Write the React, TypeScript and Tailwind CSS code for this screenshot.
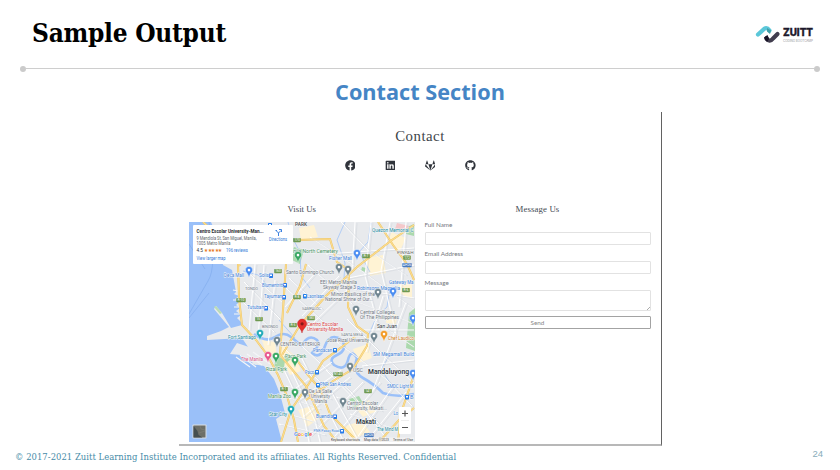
import React from "react";
import { FaFacebook, FaGithub, FaGitlab, FaLinkedin } from "react-icons/fa";

type Label = [string, number, number, number, string, number?, boolean?];
const BLUE = "#3f83d9";
const GREEN = "#4b9463";
const GREY = "#707781";
const DARK = "#333a42";
const TEAL = "#238ca0";

// text, left, baseline, width, colour, size, bold
const labels: Label[] = [
  ["PARK", 295, 226, 12, "#555", 4.5, true],
  ["Quezon Memorial C", 372, 231.5, 41.5, TEAL, 4.8],
  ["Manila North Cemetery", 286, 253, 52, GREEN, 5],
  ["Fisher Mall", 329, 259.5, 23, BLUE, 5],
  ["PINYAH", 397, 254, 16.5, "#666", 4.3],
  ["Santo Domingo Church", 286, 273.5, 48, GREY, 5],
  ["Deca Mall", 224, 276.5, 20, BLUE, 5],
  ["Solis", 259, 276.5, 10, BLUE, 5],
  ["Blumentritt", 262, 286.5, 21, BLUE, 5],
  ["TONDO", 245, 290, 13, GREY, 3.8],
  ["Tayuman", 264, 298, 18, BLUE, 5],
  ["Tutuban", 247, 309, 17, BLUE, 5],
  ["Laonlaan", 307, 297.5, 17, BLUE, 4.5],
  ["SAMPALOC", 302, 310, 19, GREY, 4],
  ["BINONDO", 262, 328, 16, GREY, 4],
  ["EEI Metro Manila", 320, 284, 37, GREY, 5],
  ["Skyway Stage 3", 323, 289, 33, GREY, 5],
  ["Robinsons Magnolia", 357, 289.5, 43, BLUE, 5],
  ["Gateway Ma", 389, 283.5, 24.5, BLUE, 4.9],
  ["Minor Basilica of the", 331, 296, 44, GREY, 5],
  ["National Shrine of Our...", 325, 301, 48, GREY, 5],
  ["Central Colleges", 360, 313.5, 35, GREY, 5],
  ["Of The Philippines", 360, 318.5, 39, GREY, 5],
  ["Centro Escolar", 307, 326, 31, "#dc3e43", 5],
  ["University-Manila", 307, 331, 36, "#dc3e43", 5],
  ["San Juan", 377, 328, 20, DARK, 5.4],
  ["SANTA MESA", 341, 336, 22, GREY, 3.8],
  ["Jose Rizal University", 327, 342, 42, GREY, 4.8],
  ["Chef Laudico", 388, 340, 26, "#d58124", 4.8],
  ["SM Megamall Build", 373, 356, 41, BLUE, 4.9],
  ["Fort Santiago", 228, 338.5, 28, TEAL, 5],
  ["CENTRO EXTERIOR", 280, 346, 40, GREY, 4.5],
  ["Pandacan", 313, 351.5, 19, BLUE, 5],
  ["Paco Park", 285, 358, 21, GREEN, 5],
  ["The Manila", 241, 360.5, 22, "#dc5686", 5],
  ["Rizal Park", 266, 370.5, 21, GREEN, 5],
  ["Paco", 305, 373.5, 9, BLUE, 5],
  ["USC", 353, 371.5, 10, GREY, 5],
  ["Mandaluyong", 368, 373.7, 41, DARK, 6.3, true],
  ["PNR San Andres", 320, 386, 31, BLUE, 4.8],
  ["SMDC Light M", 387, 387.5, 26.5, BLUE, 4.8],
  ["De La Salle", 309, 393, 23, GREY, 4.6],
  ["University", 311, 398, 19, GREY, 4.6],
  ["- Manila", 312, 403, 15, GREY, 4.6],
  ["Manila Zoo", 268, 398, 23, GREEN, 5],
  ["Star City", 269, 415.5, 18, TEAL, 5],
  ["Centro Escolar", 347, 404.5, 31, GREY, 5],
  ["University, Makati...", 347, 409.5, 40, GREY, 5],
  ["Buendia", 316, 418, 17, BLUE, 5],
  ["Makati", 356, 423.5, 20, DARK, 6.4, true],
  ["PNR Pasay Road", 313.5, 432, 26, BLUE, 4.4],
  ["The Mind M", 377, 431, 21, TEAL, 4.6],
  ["Lo", 393.5, 415, 4.5, BLUE, 4.6],
  ["B", 410, 398.5, 3.5, BLUE, 4.6],
];

const majorRoads = [
  "M238 264L239 298L242 325L256 340L268 356L278 375L287 396L294 420L298 442",
  "M203 222L230 247L240 266M286 264L283 310L280 355L306 386L324 426L337 442",
  "M414 225L392 240L357 267L326 296L300 325L282 355",
  "M297 240L330 239L337 262L349 270L348 307L357 326L368 334L367 346L353 369L333 381L306 400",
  "M378 222L393 245L407 264L414 280M306 264L300 286L287 313",
  "M281 442L291 410L310 382L323 361L355 337M379 442L400 419L414 408",
  "M398 442L401 413L414 375M294 356L307 374L320 389L330 414L358 442",
];
const streets = [
  "M245 270L282 302M244 282L280 319M241 300L274 332M255 264L249 330M264 265L258 336M275 280L268 345",
  "M289 278L322 309M286 288L329 327M308 265L352 304M318 270L285 307M339 276L302 316M351 286L312 324",
  "M310 237L355 266L414 309M341 222L367 249L406 275M355 222L352 270M371 222L365 276L379 330M390 222L381 270L397 339M406 222L399 307M326 254L414 248M348 278L414 265M354 289L414 298",
  "M354 301L414 324M362 312L414 347M347 319L384 356L414 383M383 296L366 352M406 302L373 390M337 342L385 378L412 406M360 330L414 330M362 366L414 360",
  "M284 348L332 393L359 442M302 346L351 392L389 442M283 368L302 408L309 442M292 372L315 421L320 442M300 355L344 442M326 370L380 425M332 362L296 388M341 370L296 402M350 377L303 417M363 382L310 436M380 382L330 442M394 385L354 442M406 392L366 442",
  "M280 412L312 421L340 440M289 398L320 409M279 424L325 435M286 386L331 399M336 397L382 411M350 414L397 430",
];
const transit = [
  [270, 225], [271, 275.5], [285, 285], [284, 297], [266, 308], [305, 296], [335, 350], [317, 372], [318, 385], [407, 397], [335, 416.5], [342, 431],
];
const shields: [number, number, string, string][] = [
  [297, 240, "170", "#6e9950"], [278, 271, "160", "#6e9950"], [241, 300, "R-10", "#6e9950"], [259, 319, "151", "#6e9950"], [297, 297, "R-8", "#6e9950"], [311, 318, "180", "#6e9950"], [293, 325, "R-5", "#6e9950"], [366, 256, "R-7", "#6e9950"], [407, 257.5, "172", "#6e9950"], [407, 265, "AH26", "#477abf"], [406, 290, "R-6", "#6e9950"], [338, 374, "N140", "#6e9950"], [368, 391, "141", "#6e9950"], [284, 389, "R-1", "#6e9950"], [369, 435, "AH26", "#477abf"],
];
const pins: [number, number, string][] = [
  [298, 258, "#38a763"], [357, 256, "#4b8df1"], [339, 270, "#708590"], [348, 272, "#708590"], [249, 273, "#4b8df1"], [378, 295, "#708590"], [393, 294, "#4b8df1"], [356, 312, "#708590"], [260, 336, "#20aab7"], [277, 343, "#708590"], [374, 339, "#708590"], [384, 337, "#f29b27"], [268, 358, "#e8578d"], [276, 359, "#38a763"], [295, 363, "#38a763"], [350, 369, "#708590"], [295, 395, "#38a763"], [305, 395, "#708590"], [291, 412, "#20aab7"], [343, 404, "#708590"], [413, 321, "#4b8df1"], [413, 376, "#4b8df1"],
];

function MapPin({ x, y, color }: { x: number; y: number; color: string }) {
  return (
    <g transform={`translate(${x} ${y})`}>
      <path d="M0 5C-1-.1-3.6-.6-3.6-3A3.6 3.6 0 1 1 3.6-3C3.6-.6 1-.1 0 5Z" fill={color} stroke="#fff" strokeWidth=".4" />
      <circle cy="-2.9" r="1.3" fill="#fff" />
    </g>
  );
}

function MapView() {
  return (
    <svg className="block h-[220px] w-[225.5px]" viewBox="189 222 225.5 220" fontFamily="Roboto, sans-serif">
      <rect x="189" y="222" width="226" height="220" fill="#e8eaed" />
      <g fill="#fff3d4">
        <path d="M366 258l17-3 3 18-16 3zM283 345l12 11 6 15-11 4-11-20zM262 340l13 2 2 17-12-9zM354 406l15-6 8 11-14 6zM391 232l15 6-6 13-12-8z" />
        <path d="M353 349l15-5 4 14-14 5zM397 281l15 2v16l-11-5zM298 410l14-4 6 13-11 8zM345 426l17-5 8 11-19 8zM299 228l15-3 4 12-17 3zM387 313l10 2-1 9-10-1z" />
      </g>
      <g fill="#abd9ad">
        <path d="M294 247l10 3-4 14-10-5zM276 354l9 7-2 12-9-4zM407 227l7-3v12l-8-2zM409 313l6-5v43l-9-3zM349 399l10-3 4 7-9 5zM284 356l5-2 2 5-5 4zM362 267l4 1v4l-5-1z" />
      </g>
      <path d="M397 223l12 3-2 6-12-3z" fill="#f4c8ca" />
      <path d="M189 222H211L219 240L223 265L232 270L236 292L234 294L239 296L235 299L239 302L236 305L240 308L236 311L241 315L237 318L242 323L242 338L250 350L246 352L254 361L252 364L264 366L274 379L280 394L285 413L276 419L282 442H189Z" fill="#9ac0f9" />
      <path d="M207 336L221 331L229 327L214 309L216 306L222 313L231 328L242 325V338L207 340ZM230 354L237 343L249 347L262 361L256 365L241 355Z" fill="#e8eaed" />
      <path d="M214 307l2-1 6 7-2 1z" fill="#b9dcb7" />
      <g stroke="#f4f5f8" strokeWidth="1.2">
        <path d="M236 357l14 10M240 355l16 12M247 354l15 11M253 352l17 12M238 291l-5-1M239 300h-6M240 307h-6M240 314h-6" />
      </g>
      <g fill="none" stroke="#9ac0f9" strokeLinejoin="round">
        <path d="M254 334Q266 343 275 337T291 337L302 346Q308 333 317 340Q321 345 312 353Q320 360 325 346T342 340Q348 350 337 355Q328 359 334 365Q345 372 348 360T357 358Q352 372 363 378Q374 384 383 393Q396 398 414 394" strokeWidth="2.6" />
        <path d="M288 222l4 15 8 15 1 24 9 12M345 222l-8 18 8 23-1 15M371 223l-3 19-9 10 11 20M390 288l-3 19-10 9-9 20M243 271l15 4 12 13M279 320l16 18M390 355l-9 14 13 20M324 401l-18-6" strokeWidth=".7" />
      </g>
      <g fill="none" stroke="#fff" strokeWidth="1">{streets.map((d) => <path key={d} d={d} />)}</g>
      <g fill="none" stroke="#cbd0d6" strokeWidth=".4">{streets.map((d) => <path key={d} d={d} transform="translate(2 1)" />)}</g>
      <g fill="none" stroke="#edc461" strokeWidth="2">{majorRoads.map((d) => <path key={d} d={d} />)}</g>
      <g fill="none" stroke="#fbdc90" strokeWidth="1.2">{majorRoads.map((d) => <path key={d} d={d} />)}</g>
      <path d="M189 318L209 293M189 314L208 281Q217 267 209 222M189 244L205 269" fill="none" stroke="#79a5e8" strokeWidth=".5" />
      {shields.map(([x, y, text, color]) => (
        <g key={`${x}-${y}`}>
          <rect x={x - (text.length > 3 ? 4.7 : 3.8)} y={y - 2} width={text.length > 3 ? 9.4 : 7.6} height="4.3" rx=".7" fill={color} />
          <text x={x} y={y + 1.3} textAnchor="middle" fontSize="3.4" fill="#fff">{text}</text>
        </g>
      ))}
      {transit.map(([x, y]) => (
        <g key={`${x}-${y}`}>
          <rect x={x - 2} y={y - 2} width="4" height="4.4" rx=".6" fill="#277ce8" />
          <path d={`M${x - 1} ${y - 1}h2v1.6h-2z`} fill="#fff" />
        </g>
      ))}
      <g stroke="#f4f6f8" strokeWidth="1" paintOrder="stroke">
        {labels.map(([text, x, y, width, color, size, bold]) => (
          <text key={`${text}-${y}`} x={x} y={y} textLength={width} lengthAdjust="spacingAndGlyphs" fill={color} fontSize={size} fontWeight={bold ? 600 : 400}>{text}</text>
        ))}
      </g>
      {pins.map(([x, y, color]) => <MapPin key={`${x}-${y}`} x={x} y={y} color={color} />)}
      <path d="M302 333C301 328 297.5 327.5 297.5 323.7A4.6 4.6 0 1 1 306.7 323.7C306.7 327.5 303 328 302 333Z" fill="#e52e2c" stroke="#b71f21" strokeWidth=".4" />
      <circle cx="302.1" cy="323.8" r="1.6" fill="#851818" />
      <text x="294" y="435.5" fontSize="6" fontWeight="500" textLength="18" lengthAdjust="spacingAndGlyphs" stroke="#fff" strokeWidth=".7" paintOrder="stroke">
        <tspan fill="#4285f4">G</tspan><tspan fill="#ea4335">o</tspan><tspan fill="#fbbc05">o</tspan><tspan fill="#4285f4">g</tspan><tspan fill="#34a853">l</tspan><tspan fill="#ea4335">e</tspan>
      </text>
      <rect x="330" y="437.5" width="84" height="4.5" fill="#f3f3f3" opacity=".85" />
      <g fontSize="3.7" fill="#474747">
        <text x="331" y="441" textLength="29" lengthAdjust="spacingAndGlyphs">Keyboard shortcuts</text>
        <text x="364" y="441" textLength="25" lengthAdjust="spacingAndGlyphs">Map data ©2023</text>
        <text x="393" y="441" textLength="20" lengthAdjust="spacingAndGlyphs">Terms of Use</text>
      </g>
      <rect x="399" y="407" width="12" height="27" rx="1" fill="#fff" />
      <path d="M402 413.5h6M405 410.5v6M402 427.5h6" stroke="#565656" strokeWidth="1.2" />
      <path d="M401 420.5h8" stroke="#ddd" strokeWidth=".5" />
      <rect x="192.5" y="424.5" width="14" height="14" rx=".7" fill="#d8dde2" />
      <rect x="193.5" y="425.5" width="12" height="12" fill="#6d6f68" />
      <path d="M193.5 426l4 5 1 4 4 2.5h-9z" fill="#464f50" />
      <path d="M200 426l1 3 4 1M199 433l6-2" fill="none" stroke="#85847b" strokeWidth=".5" />
      <rect x="193" y="225" width="100" height="39" rx="1" fill="#fff" />
      <g fontSize="4.6" fill="#62666b">
        <text x="196.5" y="233" textLength="67" lengthAdjust="spacingAndGlyphs" fontWeight="700" fontSize="4.9" fill="#292b2e">Centro Escolar University-Man...</text>
        <text x="196.5" y="239.7" textLength="60" lengthAdjust="spacingAndGlyphs">9 Mendiola St, San Miguel, Manila,</text>
        <text x="196.5" y="244.5" textLength="34" lengthAdjust="spacingAndGlyphs">1005 Metro Manila</text>
        <text x="196.5" y="251.5" textLength="6.5" lengthAdjust="spacingAndGlyphs" fill="#333">4.5</text>
        <text x="204" y="251.8" textLength="18" fill="#e87825" fontSize="5.3" lengthAdjust="spacingAndGlyphs">★★★★★</text>
        <text x="226" y="251.5" textLength="22" lengthAdjust="spacingAndGlyphs" fill="#3078d6">196 reviews</text>
        <text x="196.5" y="260" textLength="29" lengthAdjust="spacingAndGlyphs" fill="#3078d6">View larger map</text>
        <text x="269" y="241" textLength="18" fill="#3078d6" lengthAdjust="spacingAndGlyphs">Directions</text>
      </g>
      <path d="M278.5 236v-3l-2-2M278.5 233l2.5-2.5M279 229.5h2.5v2.5M275.5 230.5h1.5" fill="none" stroke="#3b81df" strokeWidth="1" />
    </svg>
  );
}

function ZuittLogo() {
  return (
    <svg className="h-5 w-[64px]" viewBox="755 24 64 20" aria-label="Zuitt Coding Bootcamp">
      <path d="M758 34.5L764.3 28.8Q767 27 769.5 30.5" stroke="#5bc7d9" strokeWidth="4.2" strokeLinecap="round" strokeLinejoin="round" fill="none" />
      <path d="M767 28l4 2.5-1 3.5-3-2.5z" fill="#429fa9" />
      <path d="M766.5 38Q769.5 43 773 38.5L777.5 34" stroke="#413d4e" strokeWidth="4.2" strokeLinecap="round" strokeLinejoin="round" fill="none" />
      <path d="M764 37.5l3.5-2.5 1.5 4-2 3q-3-2-3-4.5" fill="#171226" />
      <text x="783" y="36" textLength="30" lengthAdjust="spacingAndGlyphs" fontFamily="Inter, sans-serif" fontSize="10.8" fontWeight="800" fill="#1d192b" stroke="#1d192b" strokeWidth=".35">ZUITT</text>
      <text x="783" y="41.5" textLength="30" lengthAdjust="spacingAndGlyphs" fontFamily="Inter, sans-serif" fontSize="3.3" fill="#96979c">CODING BOOTCAMP</text>
    </svg>
  );
}

function Field({ label, tall = false }: { label: string; tall?: boolean }) {
  return (
    <label className="block font-[Lato,sans-serif] text-[6.3px] leading-[8px] text-[#74787d]">
      {label}
      {tall ? (
        <span className="mt-[3px] flex h-[21px] items-end justify-end rounded-[1px] border border-[#e2e2e2]">
          <svg className="size-[3px]" viewBox="0 0 3 3"><path d="M0 3L3 0" stroke="#888" strokeWidth=".7" /></svg>
        </span>
      ) : (
        <span className="mt-[3px] block h-[13px] rounded-[1px] border border-[#e2e2e2]" />
      )}
    </label>
  );
}

export default function App() {
  return (
    <main className="flex h-[470px] w-[840px] flex-col overflow-hidden bg-white">
      <header className="flex h-[66px] shrink-0 items-start justify-between pr-[21px] pl-[32px]">
        <h1 className="mt-[16px] font-['Roboto_Slab','DejaVu_Serif_Condensed','DejaVu_Serif',serif] text-[26px] leading-[34px] font-bold tracking-[-0.27px] whitespace-nowrap text-black">Sample Output</h1>
        <div className="mt-6"><ZuittLogo /></div>
      </header>
      <div className="mx-5 flex h-[5px] shrink-0 items-center">
        <span className="size-[6px] rounded-full bg-[#cbcbcb]" />
        <span className="h-px flex-1 bg-[#cecece]" />
        <span className="size-[6px] rounded-full bg-[#cbcbcb]" />
      </div>
      <h2 className="mt-[5px] h-[36px] shrink-0 text-center font-['Open_Sans',sans-serif] text-[21.7px] leading-[32px] font-bold text-[#4585c5]">Contact Section</h2>
      <section className="ml-[179px] flex h-[334px] w-[483px] shrink-0 flex-col border-r border-b-2 border-r-[#626262] border-b-[#b8b8b8]">
        <h3 className="mt-[14px] text-center font-['Liberation_Serif',serif] text-[14.8px] leading-[20px] tracking-[0.5px] text-[#40454a]">Contact</h3>
        <div className="mt-[14px] ml-[165.5px] flex h-[11px] gap-[29.3px] text-[10.8px] text-[#30343b]">
          <FaFacebook /><FaLinkedin /><FaGitlab /><FaGithub />
        </div>
        <div className="mt-[33px] ml-[10px] grid grid-cols-[225.5px_226px] gap-[10px]">
          <div>
            <h4 className="mb-[8px] h-[10px] text-center font-['Liberation_Serif',serif] text-[8.8px] leading-[10px] text-[#454b54]">Visit Us</h4>
            <MapView />
          </div>
          <div>
            <h4 className="h-[10px] text-center font-['Liberation_Serif',serif] text-[8.8px] leading-[10px] tracking-[0.1px] text-[#454b54]">Message Us</h4>
            <form className="mt-[7px] flex flex-col gap-[5px]">
              <Field label="Full Name" />
              <Field label="Email Address" />
              <Field label="Message" tall />
              <button type="button" className="h-[13px] rounded-[1px] border border-[#a3a3a3] font-[Lato,sans-serif] text-[6.3px] leading-[10px] text-[#888]">Send</button>
            </form>
          </div>
        </div>
      </section>
      <footer className="mt-[3px] flex h-[15px] items-center justify-between pr-[17px] pl-[15px]">
        <p className="font-['Roboto_Slab','DejaVu_Serif_Condensed','DejaVu_Serif',serif] text-[9.4px] leading-[14px] tracking-[0.03px] whitespace-nowrap text-[#478ca8]">© 2017-2021 Zuitt Learning Institute Incorporated and its affiliates. All Rights Reserved. Confidential</p>
        <span className="-mt-[5px] font-['Liberation_Sans',sans-serif] text-[9.5px] text-[#89adbb]">24</span>
      </footer>
    </main>
  );
}
